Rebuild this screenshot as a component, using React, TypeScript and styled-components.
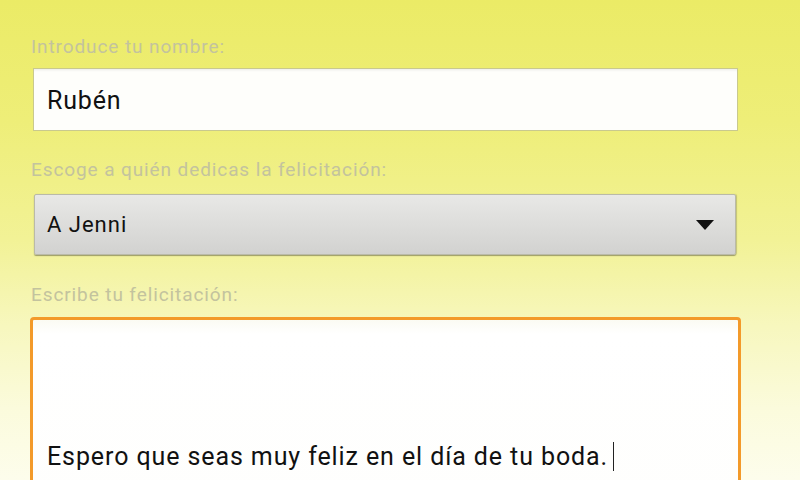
import React from "react";
import styled, { createGlobalStyle } from "styled-components";

const Global = createGlobalStyle`
  html, body { margin: 0; padding: 0; }
  body { font-family: Roboto, "Noto Sans", sans-serif; }
`;

const Screen = styled.div`
  width: 800px;
  height: 480px;
  overflow: hidden;
  box-sizing: border-box;
  padding: 36px 0 0 31px;
  background: linear-gradient(
    180deg,
    #ebeb66 0%,
    #eeee78 25%,
    #f2f296 50%,
    #f7f7be 68%,
    #fbfbdc 85%,
    #fdfdec 100%
  );
  display: flex;
  flex-direction: column;
  & > * { flex-shrink: 0; }
`;

const Label = styled.div<{ $gap: number }>`
  font-size: 19px;
  line-height: 22px;
  letter-spacing: 0.9px;
  color: #c3c39e;
  margin-bottom: ${(p) => p.$gap}px;
`;

const TextField = styled.div`
  width: 705px;
  height: 63px;
  margin-left: 2px;
  box-sizing: border-box;
  border: 1px solid #c9c98e;
  background: #fefefb;
  box-shadow: inset 0 3px 3px -2px rgba(0, 0, 0, 0.08);
  display: flex;
  align-items: center;
  padding: 2px 0 0 13px;
  font-size: 25px;
  letter-spacing: 0.8px;
  color: #111;
  margin-bottom: 28px;
`;

const Select = styled.div`
  width: 702px;
  height: 61px;
  margin-left: 3px;
  box-sizing: border-box;
  border: 1px solid #babaa8;
  border-radius: 2px;
  background: linear-gradient(180deg, #e8e8e6 0%, #dcdcda 55%, #d2d2d0 100%);
  box-shadow: 0 1px 1px rgba(90, 90, 60, 0.55), 1px 0 1px rgba(90, 90, 60, 0.25);
  display: flex;
  align-items: center;
  justify-content: space-between;
  padding: 0 21px 0 12px;
  font-size: 22px;
  letter-spacing: 1px;
  color: #111;
  margin-bottom: 29px;
`;

const Arrow = styled.div`
  width: 0;
  height: 0;
  border-left: 9px solid transparent;
  border-right: 9px solid transparent;
  border-top: 10px solid #111;
`;

const TextArea = styled.div`
  width: 711px;
  height: 240px;
  margin-left: -1px;
  box-sizing: border-box;
  border: 3px solid #f39a2a;
  border-radius: 4px;
  background: linear-gradient(180deg, #fbfbf3 0%, #ffffff 6%, #fefefc 100%);
  padding: 122px 0 0 14px;
  font-size: 25px;
  line-height: 30px;
  letter-spacing: 0.9px;
  color: #111;
  white-space: nowrap;
`;

const Caret = styled.span`
  display: inline-block;
  width: 0;
  height: 29px;
  border-left: 1px solid #222;
  margin-left: 5px;
  vertical-align: -6px;
`;

export default function App() {
  return (
    <>
      <Global />
      <Screen>
        <Label $gap={10}>Introduce tu nombre:</Label>
        <TextField>Rubén</TextField>
        <Label $gap={13}>Escoge a quién dedicas la felicitación:</Label>
        <Select>
          <span>A Jenni</span>
          <Arrow />
        </Select>
        <Label $gap={11}>Escribe tu felicitación:</Label>
        <TextArea>
          Espero que seas muy feliz en el día de tu boda.
          <Caret />
        </TextArea>
      </Screen>
    </>
  );
}
